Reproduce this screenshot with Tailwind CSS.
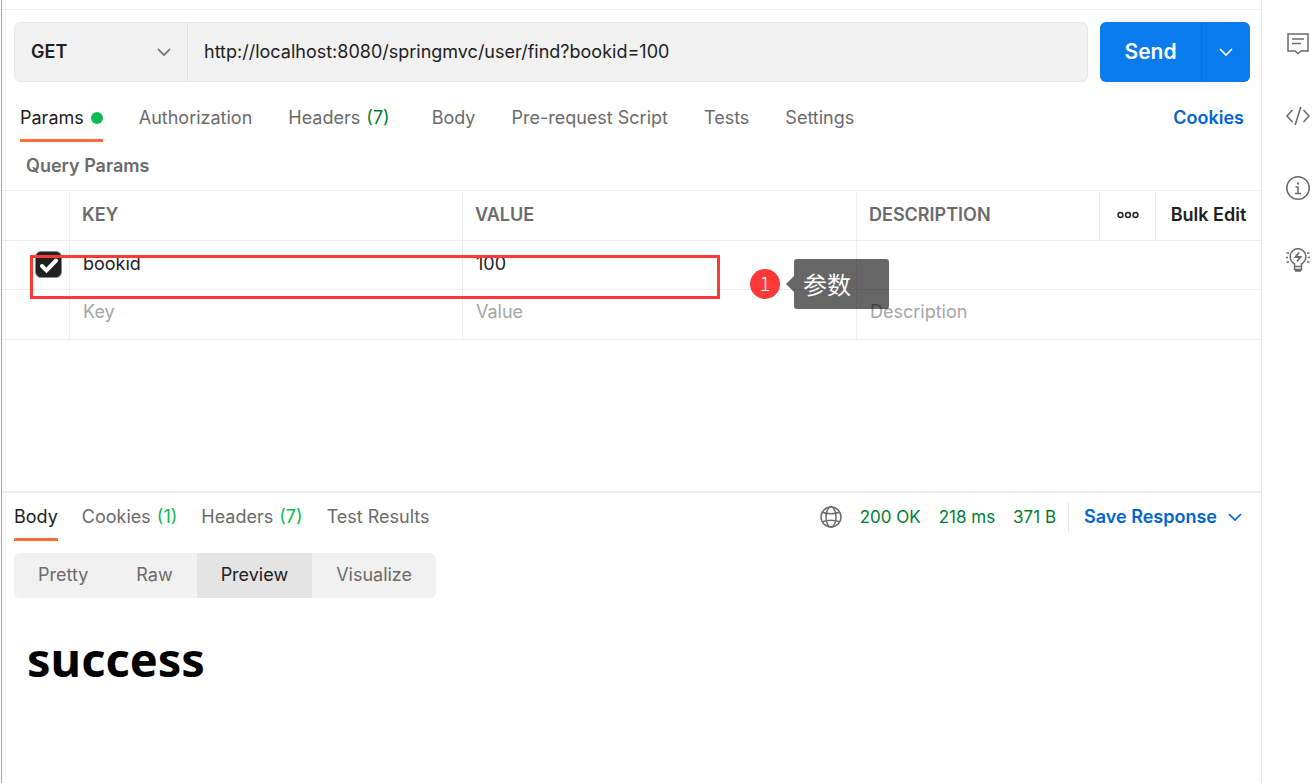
<!DOCTYPE html>
<html lang="en">
<head>
<meta charset="utf-8">
<meta name="viewport" content="width=device-width, initial-scale=1">
<title>API request</title>
<script src="https://cdn.jsdelivr.net/npm/@tailwindcss/browser@4"></script>
</head>
<body class="min-h-screen bg-white pl-px font-['Inter','Noto_Sans_CJK_SC',sans-serif] text-lg leading-6 text-[#6b6b6b]">
<div class="flex min-h-screen border-l border-[#79a9e4]">
  <main class="relative flex min-w-0 flex-1 flex-col border-r border-[#e6e6e6]">
    <div class="h-[10px] border-b border-[#ededed]"></div>

    <form class="flex gap-3 pt-3 pr-[11px] pl-3">
      <div class="flex h-15 min-w-0 flex-1 rounded-md border border-[#e6e6e6] bg-[#f1f1f1]">
        <div class="relative w-[173px] border-r border-[#e0e0e0]">
          <select aria-label="Method" class="h-full w-full appearance-none pl-4 font-semibold text-[#212121]"><option>GET</option><option>POST</option></select>
          <svg class="pointer-events-none absolute top-[23px] right-4 h-3 w-[14px]" viewBox="0 0 14 12" fill="none" stroke="#6b6b6b" stroke-width="1.7"><path d="M1 3l6 6 6-6"/></svg>
        </div>
        <input aria-label="Request URL" class="min-w-0 flex-1 px-4 text-[#212121]" value="http://localhost:8080/springmvc/user/find?bookid=100">
      </div>
      <div class="flex w-[150px] overflow-hidden rounded-md bg-[#097bed] text-white">
        <button type="submit" class="flex-1 border-r border-[#0a6fd4] text-[21px] font-semibold">Send</button>
        <button type="button" aria-label="Send options" class="flex w-12 items-center justify-center"><svg class="h-3 w-[14px]" viewBox="0 0 14 12" fill="none" stroke="#fff" stroke-width="1.7"><path d="M1 3l6 6 6-6"/></svg></button>
      </div>
    </form>

    <nav class="mt-6 flex items-start pr-[17px] pl-[18px]">
      <div class="flex flex-1 gap-9">
        <button class="flex h-9 items-start gap-[7px] border-b-3 border-[#ff6c37] text-[#212121]">Params<span class="mt-[6px] size-3 rounded-full bg-[#0cbb52]"></span></button>
        <button class="h-6">Authorization</button>
        <button class="h-6">Headers <span class="ml-px text-[#007f31]">(7)</span></button>
        <button class="ml-[6px] h-6">Body</button>
        <button class="h-6">Pre-request Script</button>
        <button class="h-6">Tests</button>
        <button class="h-6">Settings</button>
      </div>
      <a href="#" class="font-semibold text-[#0265d2]">Cookies</a>
    </nav>

    <h2 class="mt-3 pl-6 font-semibold">Query Params</h2>

    <table class="mt-3 w-full table-fixed border-separate border-spacing-0 border-t border-[#ededed] text-left">
      <colgroup><col class="w-[68px]"><col class="w-[393px]"><col class="w-[394px]"><col><col class="w-14"><col class="w-[105px]"></colgroup>
      <thead>
        <tr class="h-[50px] *:border-b *:border-[#ededed] *:pb-[2px]">
          <th class="border-r"></th>
          <th class="border-r pl-3 font-semibold">KEY</th>
          <th class="border-r pl-3 font-semibold">VALUE</th>
          <th class="border-r pl-3 font-semibold">DESCRIPTION</th>
          <th class="border-r"><button aria-label="More columns" class="flex w-full justify-center"><svg class="h-2 w-[22px]" viewBox="0 0 22 8" fill="none" stroke="#212121" stroke-width="1.5"><circle cx="3.500" cy="4" r="2.400"/><circle cx="11" cy="4" r="2.400"/><circle cx="18.500" cy="4" r="2.400"/></svg></button></th>
          <th class="text-center"><button class="font-semibold text-[#212121]">Bulk Edit</button></th>
        </tr>
      </thead>
      <tbody>
        <tr class="h-[49px] *:border-b *:border-[#ededed] *:align-top">
          <td class="relative border-r pt-[10px] pl-[33px]">
            <input type="checkbox" checked aria-label="Enable bookid" class="block size-[27px] appearance-none rounded-md border border-[#8a8a8a] bg-[#212121]">
            <svg class="pointer-events-none absolute top-[10px] left-[33px] size-[27px]" viewBox="0 0 27 27" fill="none" stroke="#fff" stroke-width="4" stroke-linecap="round"><path d="M7 15l4.500 4.500L21 9.500"/></svg>
          </td>
          <td class="border-r pt-[11px] pl-[13px]"><input aria-label="Key" value="bookid" class="block h-6 w-full text-[#212121]"></td>
          <td class="border-r pt-[11px] pl-[13px]"><input aria-label="Value" value="100" class="block h-6 w-full text-[#212121]"></td>
          <td colspan="3" class="pt-[11px] pl-[13px]"><input aria-label="Description" class="block h-6 w-full"></td>
        </tr>
        <tr class="h-[50px] *:border-b *:border-[#ededed] *:align-top">
          <td class="border-r"></td>
          <td class="border-r pt-[10px] pl-[13px]"><input aria-label="New key" placeholder="Key" class="block h-6 w-full placeholder:text-[#a6a6a6]"></td>
          <td class="border-r pt-[10px] pl-[13px]"><input aria-label="New value" placeholder="Value" class="block h-6 w-full placeholder:text-[#a6a6a6]"></td>
          <td colspan="3" class="pt-[10px] pl-[13px]"><input aria-label="New description" placeholder="Description" class="block h-6 w-full placeholder:text-[#a6a6a6]"></td>
        </tr>
      </tbody>
    </table>

    <section class="mt-[151px] border-t-2 border-[#ededed]">
      <div class="flex items-start pt-3 pr-[19px] pl-3">
        <nav class="flex flex-1 gap-6">
          <button class="flex h-9 items-start border-b-3 border-[#ff6c37] text-[#212121]">Body</button>
          <button class="h-6">Cookies <span class="ml-px text-[#0cbb52]">(1)</span></button>
          <button class="h-6">Headers <span class="ml-px text-[#0cbb52]">(7)</span></button>
          <button class="h-6">Test Results</button>
        </nav>
        <div class="flex h-6 items-center gap-[18px] text-[17px] text-[#007f31]">
          <svg class="size-[22px]" viewBox="0 0 22 22" fill="none" stroke="#6b6b6b" stroke-width="1.500"><circle cx="11" cy="11" r="10"/><ellipse cx="11" cy="11" rx="5" ry="10"/><path d="M2.500 6.200Q11 9.200 19.500 6.200M2.500 15.800Q11 12.800 19.500 15.800"/></svg>
          <span>200 OK</span><span>218 ms</span><span>371 B</span>
        </div>
        <div class="-my-[3px] ml-3 flex h-[30px] items-center border-l border-[#e6e6e6] pl-[15px]">
          <button class="flex items-center gap-[11px] font-semibold text-[#0265d2]">Save Response<svg class="h-3 w-[14px]" viewBox="0 0 14 12" fill="none" stroke="#0265d2" stroke-width="1.7"><path d="M1 3l6 6 6-6"/></svg></button>
        </div>
      </div>
      <div class="mt-3 ml-3 flex h-[45px] w-fit overflow-hidden rounded-md bg-[#f1f1f1] *:px-6 *:pb-[2px]">
        <button>Pretty</button>
        <button>Raw</button>
        <button class="bg-[#e4e4e4] text-[#212121]">Preview</button>
        <button>Visualize</button>
      </div>
      <h1 class="mt-7 ml-[25px] font-['Noto_Sans',sans-serif] text-[47px] leading-[66px] font-bold text-black">success</h1>
    </section>

    <div class="pointer-events-none absolute top-[255px] left-7 h-11 w-[690px] border-3 border-[#fc3838]"></div>
    <div class="absolute top-[259px] left-[748px] flex h-[50px] items-center">
      <span class="flex size-[30px] items-center justify-center rounded-full bg-[#fc3838] pb-[2px] font-['Noto_Sans_CJK_SC',sans-serif] text-xl font-light text-white">1</span>
      <svg class="ml-[6px] h-4 w-2" viewBox="0 0 8 16"><path d="M8 0v16L0 8z" fill="#000" fill-opacity=".6"/></svg>
      <span class="flex h-full w-[95px] items-center rounded-[3px] bg-black/60 pl-[9px] font-['Noto_Sans_CJK_SC',sans-serif] text-2xl text-white">参数</span>
    </div>
  </main>

  <aside class="flex w-[50px] flex-col items-end gap-12 pt-8 pr-[2px] text-[#6b6b6b]">
    <button aria-label="Comments"><svg class="size-6" viewBox="0 0 24 24" fill="none" stroke="currentColor" stroke-width="1.5"><path d="M2 2h20v17h-7l-3 2.500-3-2.500H2zM6 7h12M6 11.500h9"/></svg></button>
    <button aria-label="Code"><svg class="size-6" viewBox="0 0 24 24" fill="none" stroke="currentColor" stroke-width="1.6"><path d="M6.500 6L1 12l5.500 6M17.500 6l5.500 6-5.500 6M14.800 3l-5.600 18"/></svg></button>
    <button aria-label="Info"><svg class="size-6" viewBox="0 0 24 24" fill="none" stroke="currentColor" stroke-width="1.5"><circle cx="12" cy="12" r="11.200"/><path d="M9.500 11H12v6M9 17.500h6"/><path d="M11 7.500h2" stroke-width="2"/></svg></button>
    <button aria-label="Tips"><svg class="size-6" viewBox="0 0 24 24" fill="none" stroke="currentColor" stroke-width="1.5"><path d="M8.500 18v-2C6 14.500 4.200 12 4.200 8.500a7.800 7.800 0 0 1 15.600 0c0 3.500-1.800 6-4.300 7.500v2M8.500 15.500v6h7v-6M8.500 18.500h7"/><path d="M9 22.500h6" stroke-width="2.500"/><path d="M13 4.500L9.500 9h5L11 13.500" stroke-width="1.800"/><path d="M.500 5h2.500M0 9.500h2M.500 14h2.500M21 5h2.500M22 9.500h2M21 14h2.500"/></svg></button>
  </aside>
</div>
</body>
</html>
